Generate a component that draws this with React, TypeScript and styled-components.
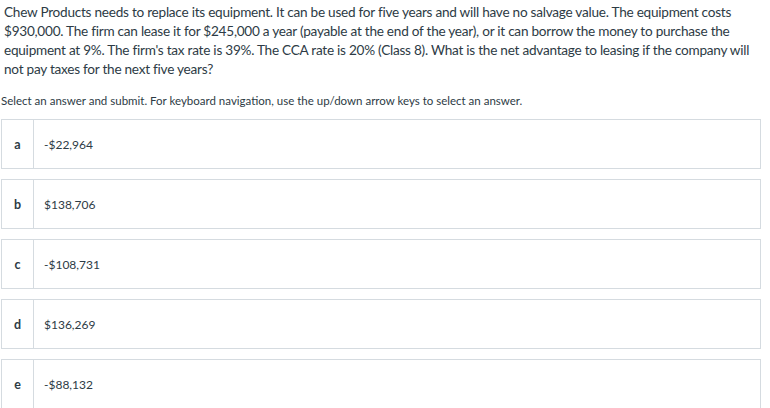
import styled, { createGlobalStyle } from 'styled-components'

const GlobalStyle = createGlobalStyle`
  body {
    margin: 0;
    background: #ffffff;
    font-family: Lato, "Open Sans", sans-serif;
    color: #2d3b45;
  }
`

const Page = styled.div`
  padding: 3px 4px 0 1px;
  width: 765px;
  box-sizing: border-box;
`

const Question = styled.p`
  margin: 0 0 0 3px;
  font-size: 13.6px;
  letter-spacing: -0.25px;
  line-height: 19px;
  color: #2d3b45;
`

const QuestionLine = styled.span`
  display: block;
  white-space: nowrap;
`

const Instructions = styled.p`
  margin: 14px 0 10px 0;
  font-size: 11.5px;
  line-height: 16px;
  color: #2d3b45;
`

const Options = styled.div`
  display: flex;
  flex-direction: column;
  gap: 10px;
`

const Option = styled.label`
  display: flex;
  height: 50px;
  width: 760px;
  box-sizing: border-box;
  border: 1px solid #d5dbe0;
  background: #ffffff;
  cursor: pointer;
`

const Letter = styled.span`
  width: 31px;
  flex: none;
  display: flex;
  align-items: center;
  justify-content: center;
  border-right: 1px solid #d5dbe0;
  font-size: 12.5px;
  font-weight: 700;
  color: #2d3b45;
`

const Answer = styled.span`
  display: flex;
  align-items: center;
  padding-left: 10px;
  font-size: 12px;
  color: #2d3b45;
`

const questionLines = [
  'Chew Products needs to replace its equipment. It can be used for five years and will have no salvage value. The equipment costs',
  '$930,000. The firm can lease it for $245,000 a year (payable at the end of the year), or it can borrow the money to purchase the',
  "equipment at 9%. The firm's tax rate is 39%. The CCA rate is 20% (Class 8). What is the net advantage to leasing if the company will",
  'not pay taxes for the next five years?',
]

const answers = [
  { key: 'a', value: '-$22,964' },
  { key: 'b', value: '$138,706' },
  { key: 'c', value: '-$108,731' },
  { key: 'd', value: '$136,269' },
  { key: 'e', value: '-$88,132' },
]

export default function App() {
  return (
    <>
      <GlobalStyle />
      <Page>
        <Question>
          {questionLines.map((line, i) => (
            <QuestionLine key={i}>{line}</QuestionLine>
          ))}
        </Question>
        <Instructions>
          Select an answer and submit. For keyboard navigation, use the up/down arrow keys to select an answer.
        </Instructions>
        <Options role="radiogroup">
          {answers.map(a => (
            <Option key={a.key}>
              <Letter>{a.key}</Letter>
              <Answer>{a.value}</Answer>
            </Option>
          ))}
        </Options>
      </Page>
    </>
  )
}
